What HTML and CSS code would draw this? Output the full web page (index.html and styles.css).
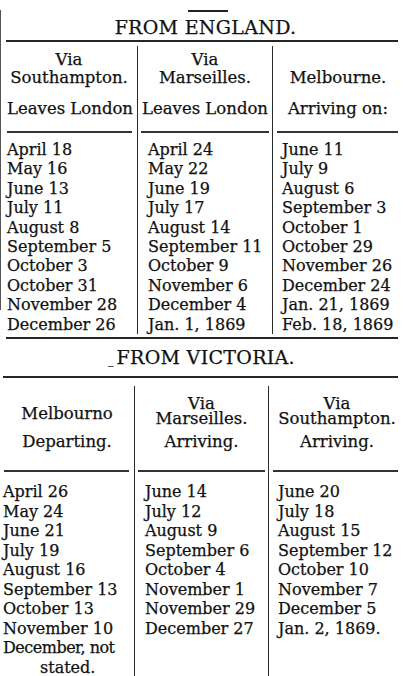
FILE: index.html
```html
<!DOCTYPE html>
<html lang="en">
<head>
<meta charset="utf-8">
<title>Mail Dates</title>
<link rel="stylesheet" href="styles.css">
</head>
<body>
<div class="page">
  <div class="top-rule"></div>
  <h1 class="title title-england">FROM ENGLAND.</h1>
  <section class="table table-england">
    <div class="col c1">
      <div class="head">
        <div class="top">Via
Southampton.</div>
        <div class="l3">Leaves London</div>
      </div>
      <div class="rule"></div>
      <ul class="dates">
        <li>April 18</li>
        <li>May 16</li>
        <li>June 13</li>
        <li>July 11</li>
        <li>August 8</li>
        <li>September 5</li>
        <li>October 3</li>
        <li>October 31</li>
        <li>November 28</li>
        <li>December 26</li>
      </ul>
    </div>
    <div class="col c2">
      <div class="head">
        <div class="top">Via
Marseilles.</div>
        <div class="l3">Leaves London</div>
      </div>
      <div class="rule"></div>
      <ul class="dates">
        <li>April 24</li>
        <li>May 22</li>
        <li>June 19</li>
        <li>July 17</li>
        <li>August 14</li>
        <li>September 11</li>
        <li>October 9</li>
        <li>November 6</li>
        <li>December 4</li>
        <li>Jan. 1, 1869</li>
      </ul>
    </div>
    <div class="col c3">
      <div class="head">
        <div class="top">Melbourne.</div>
        <div class="l3">Arriving on:</div>
      </div>
      <div class="rule"></div>
      <ul class="dates">
        <li>June 11</li>
        <li>July 9</li>
        <li>August 6</li>
        <li>September 3</li>
        <li>October 1</li>
        <li>October 29</li>
        <li>November 26</li>
        <li>December 24</li>
        <li>Jan. 21, 1869</li>
        <li>Feb. 18, 1869</li>
      </ul>
    </div>
  </section>
  <h2 class="title title-victoria"><span class="us">_</span>FROM VICTORIA.</h2>
  <section class="table table-victoria">
    <div class="col c1">
      <div class="head">
        <div class="top top-raised">Melbourno</div>
        <div class="l3">Departing.</div>
      </div>
      <div class="rule"></div>
      <ul class="dates">
        <li>April 26</li>
        <li>May 24</li>
        <li>June 21</li>
        <li>July 19</li>
        <li>August 16</li>
        <li>September 13</li>
        <li>October 13</li>
        <li>November 10</li>
        <li><span class="tight">December, not</span><br><span class="indent">stated.</span></li>
      </ul>
    </div>
    <div class="col c2">
      <div class="head">
        <div class="top">Via
Marseilles.</div>
        <div class="l3">Arriving.</div>
      </div>
      <div class="rule"></div>
      <ul class="dates">
        <li>June 14</li>
        <li>July 12</li>
        <li>August 9</li>
        <li>September 6</li>
        <li>October 4</li>
        <li>November 1</li>
        <li>November 29</li>
        <li>December 27</li>
      </ul>
    </div>
    <div class="col c3">
      <div class="head">
        <div class="top">Via
Southampton.</div>
        <div class="l3">Arriving.</div>
      </div>
      <div class="rule"></div>
      <ul class="dates">
        <li>June 20</li>
        <li>July 18</li>
        <li>August 15</li>
        <li>September 12</li>
        <li>October 10</li>
        <li>November 7</li>
        <li>December 5</li>
        <li>Jan. 2, 1869.</li>
      </ul>
    </div>
  </section>
</div>
</body>
</html>
```

FILE: styles.css
```css
html {
  background: #ffffff;
}

body {
  margin: 0;
  font-family: "DejaVu Serif", "Liberation Serif", serif;
  color: #111111;
  -webkit-text-stroke: 0.25px #111111;
  overflow: hidden;
}

.page {
  position: relative;
  width: 403px;
}

/* scanned page edge */
.page::before {
  content: "";
  position: absolute;
  left: 0;
  top: 0;
  width: 1px;
  height: 300px;
  background: #555555;
}

.top-rule {
  width: 40px;
  margin: 10px 0 0 188px;
  border-top: 2px solid #222222;
}

.title {
  margin: 0;
  font-weight: normal;
  font-size: 19px;
  line-height: 22px;
  letter-spacing: 0.3px;
  text-align: center;
  white-space: nowrap;
}

.title-england {
  margin-top: 4px;
  padding-left: 8px;
}

.title-victoria {
  margin-top: 6.3px;
}

.us {
  font-size: 11px;
  margin-right: 3px;
  letter-spacing: 0;
}

.table {
  display: grid;
  border-top: 2px solid #262626;
}

.table-england {
  margin: 2px 5px 0 6px;
  grid-template-columns: 131px 135px 1fr;
  padding: 4px 0 3px;
  border-bottom: 2px solid #262626;
}

.table-victoria {
  margin: 4.5px 5px 0 3px;
  grid-template-columns: 131px 134px 1fr;
  padding-top: 8px;
}

.col + .col {
  border-left: 1px solid #2b2b2b;
}

.head {
  box-sizing: border-box;
  text-align: center;
  font-size: 16.5px;
  white-space: nowrap;
}

.top {
  display: flex;
  flex-direction: column;
  justify-content: flex-end;
  align-items: center;
  box-sizing: border-box;
  white-space: pre-line;
}

.l3 {
  height: 18px;
  line-height: 18px;
}

.table-england .head {
  height: 85px;
  padding-top: 5.3px;
}

.table-england .top {
  height: 36px;
  line-height: 18px;
}

.table-england .l3 {
  margin-top: 12.5px;
}

.table-england .c1 .head {
  padding-left: 1px;
  padding-right: 6px;
}

.table-england .c3 .head {
  padding-left: 5px;
}

.table-victoria .head {
  height: 84px;
  padding-top: 9.8px;
}

.table-victoria .top {
  height: 30px;
  line-height: 15px;
}

.table-victoria .top-raised {
  padding-bottom: 5px;
}

.table-victoria .l3 {
  margin-top: 7.5px;
}

.table-victoria .c1 .head {
  padding-right: 3px;
}

.table-victoria .c3 .head {
  padding-left: 7px;
}

.rule {
  border-top: 2px solid #333333;
}

.c1 .rule {
  margin: 0 5px 0 1px;
}

.c2 .rule {
  margin: 0 3px;
}

.c3 .rule {
  margin: 0 0 0 4px;
}

.dates {
  list-style: none;
  margin: 0;
  padding: 0;
  font-size: 16px;
  white-space: nowrap;
}

.table-england .dates {
  margin-top: 6.7px;
  line-height: 19.45px;
}

.table-victoria .dates {
  margin-top: 10px;
  line-height: 19.5px;
}

.table-england .c1 .dates {
  padding-left: 1px;
}

.c2 .dates {
  padding-left: 10px;
}

.c3 .dates {
  padding-left: 9px;
}

.tight {
  letter-spacing: -0.5px;
}

.indent {
  padding-left: 37px;
}
```
